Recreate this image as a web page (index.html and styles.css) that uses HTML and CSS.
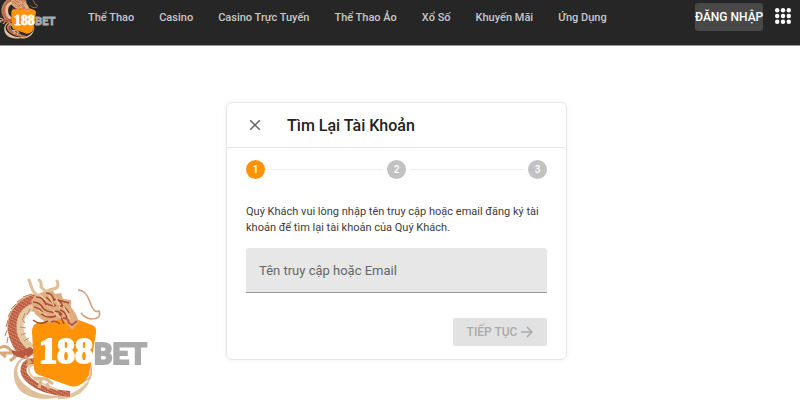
FILE: index.html
```html
<!DOCTYPE html>
<html lang="vi">
<head>
<meta charset="utf-8">
<meta name="viewport" content="width=device-width, initial-scale=1">
<title>Tìm Lại Tài Khoản</title>
<link rel="stylesheet" href="styles.css">
</head>
<body>
<header class="topbar">
  <a class="brand" href="#" aria-label="188BET">
    <svg class="brand-logo" viewBox="4 29 143 104"><use href="#logo"/></svg>
  </a>
  <nav class="menu">
    <a href="#">Thể Thao</a>
    <a href="#">Casino</a>
    <a href="#">Casino Trực Tuyến</a>
    <a href="#">Thể Thao Ảo</a>
    <a href="#">Xổ Số</a>
    <a href="#">Khuyến Mãi</a>
    <a href="#">Ứng Dụng</a>
  </nav>
  <button class="login" type="button">ĐĂNG NHẬP</button>
  <button class="apps" type="button" aria-label="Menu">
    <svg viewBox="0 0 16 16" width="16" height="16" fill="#fff">
      <circle cx="2.2" cy="2.2" r="2.2"/><circle cx="8" cy="2.2" r="2.2"/><circle cx="13.8" cy="2.2" r="2.2"/>
      <circle cx="2.2" cy="8" r="2.2"/><circle cx="8" cy="8" r="2.2"/><circle cx="13.8" cy="8" r="2.2"/>
      <circle cx="2.2" cy="13.8" r="2.2"/><circle cx="8" cy="13.8" r="2.2"/><circle cx="13.8" cy="13.8" r="2.2"/>
    </svg>
  </button>
</header>

<main class="page">
  <form class="card">
    <div class="card-head">
      <button class="close" type="button" aria-label="Đóng">
        <svg viewBox="0 0 12 12" width="12" height="12" fill="none" stroke="#62626a" stroke-width="1.5"><path d="M1.2 1.2l9.6 9.6M10.8 1.2l-9.6 9.6"/></svg>
      </button>
      <h1>Tìm Lại Tài Khoản</h1>
    </div>
    <div class="card-body">
      <ol class="steps">
        <li class="step active">1</li>
        <li class="step">2</li>
        <li class="step">3</li>
      </ol>
      <p class="hint">Quý Khách vui lòng nhập tên truy cập hoặc email đăng ký tài khoản để tìm lại tài khoản của Quý Khách.</p>
      <input class="field" type="text" aria-label="Tên truy cập hoặc Email" placeholder="Tên truy cập hoặc Email">
      <button class="next" type="submit" disabled>TIẾP TỤC
        <svg viewBox="0 0 12 12" width="12" height="12" fill="none" stroke="currentColor" stroke-width="1.5"><path d="M0 6h11M6 1l5 5-5 5"/></svg>
      </button>
    </div>
  </form>
</main>

<svg class="corner-logo" viewBox="0 0 150 130" role="img" aria-label="188BET">
  <defs>
    <pattern id="scales" width="3" height="3" patternUnits="userSpaceOnUse" patternTransform="rotate(30)">
      <rect width="3" height="3" fill="#b9563d"/>
      <path d="M0 0q1.5 2.6 3 0" fill="none" stroke="#e6b58c" stroke-width=".7"/>
    </pattern>
    <g id="logo">
      <!-- tail and hind leg -->
      <path d="M58 125C70 126 82 120 90 108C88 121 74 130 58 129Z" fill="#e2c6a0"/>
      <path d="M86 88q8 9 4 20l-8 4" fill="none" stroke="#dfb78d" stroke-width="2"/>
      <path d="M33 86C17 88 12 103 24 114S49 127 70 125C50 131 28 131 18 118C9 104 14 87 33 83Z" fill="#dec09a"/>
      <path d="M35 91C22 91 20 102 29 110S48 122 70 124" fill="none" stroke="url(#scales)" stroke-width="6"/>
      <path d="M35 95C28 95 26 102 34 108S49 117 58 120" fill="none" stroke="#e5c9a3" stroke-width="2"/>
      <!-- upper body -->
      <path d="M36 23C16 26 6 44 7 60L15 82L21 84C12 58 18 38 38 32Z" fill="#dfc199"/>
      <path d="M38 29C21 32 12 45 13 60Q14 73 25 83" fill="none" stroke="url(#scales)" stroke-width="10"/>
      <path d="M39 36C27 37 20 45 20 57Q20 70 32 78" fill="none" stroke="#e4c8a2" stroke-width="7"/>
      <path d="M36 38q-4 1-3 4M30 39l-3 6M25 43l-2 6M22 49l3 4M20 57l6 1M21 65l5-2M24 71l5-3" fill="none" stroke="#c98966" stroke-width="1"/>
      <path d="M32 24l-9 3M23 28l-6 4M16 34l-5 5M11 41l-3 6M8 50l-2 7M7 60l-2 6M8 67l-1 6" fill="none" stroke="#c87a59" stroke-width="1"/>
      <!-- fore claw -->
      <path d="M8 76Q15 86 30 77l6 4-10 8-12-3Z" fill="#ba5940"/>
      <path d="M11 81q-5-7-11-3M12 83l-11 0 5 4M16 86l-6 5M25 86l5 6-3 4" fill="none" stroke="#d9a87c" stroke-width="3" stroke-linejoin="round"/>
      <!-- badge -->
      <path d="M37 53L62 48Q69 45 76 49L92 55Q97 57 96 63L89 105Q81 119 70 116L39 105Q34 103 34 98L32 62Q32 55 37 53Z" fill="#ff9308"/>
      <path d="M34 108l12 1 7 5M41 110l-2 8M47 113l2 6" fill="none" stroke="#dfb98e" stroke-width="3"/>
      <!-- head -->
      <path d="M35 44L31 31L35 25L43 22L51 18L55 24L61 23L63 29L71 30L71 37L76 44L79 52L72 60L65 51L58 49L53 53L45 52Z" fill="#dfad7f"/>
      <path d="M39 27L33 21Q31 16 29 10M46 22L41 17Q42 12 39 10M47 21L53 19Q60 18 57 11" fill="none" stroke="#e1c098" stroke-width="3" stroke-linecap="round" stroke-linejoin="round"/>
      <path d="M36 27q8 0 10 8m-13-3q7 0 11 7m-10-2q7 1 10 8m2-22q7 0 8 8m-8-4l10 9m-13-5q6 5 12 5m-13 1q5 6 13 5m-14 2q7 5 15 2m-3-17q8 0 10 8m-5-7l11 3m-11 3q7-1 11 7m-9-3q7 2 7 10m-8-7l5 11m-13-2q5-2 9 2m-27-4q7 6 15 1m4-8q6-4 10 2" fill="none" stroke="#ad4935" stroke-width="1.5"/>
      <path d="M39 24l8 7m-9 9l8 5m3-20l5 11m2-8l4 10m3-2l6 10M53 41l8 7M66 42l4 7" stroke="#efcfa2" stroke-width="1.3"/>
      <path d="M63 48q5 0 6 5l3 2 5-4" fill="none" stroke="#bc5a40" stroke-width="2"/>
      <!-- whisker -->
      <path d="M78 20Q86 20 90 32T99 41Q102 49 91 49Q85 48 81 43" fill="none" stroke="#cf9c79" stroke-width="1.5"/>
      <text class="logo-num" x="39" y="93">188</text>
      <text class="logo-bet" x="94" y="94">BET</text>
    </g>
  </defs>
  <use href="#logo"/>
</svg>
</body>
</html>
```
FILE: styles.css
```css
* { box-sizing: border-box; }
body {
  margin: 0;
  min-height: 100vh;
  background: #fff;
  color: #3c3c3c;
  font-family: Roboto, "Liberation Sans", sans-serif;
  overflow-x: hidden;
}
button { border: 0; padding: 0; font: inherit; background: none; }
svg { display: block; }

.topbar {
  display: flex;
  align-items: flex-start;
  min-height: 46px;
  padding-right: 9px;
  background: #262626;
  border-bottom: 1px solid #999;
}
.brand { width: 88px; flex-shrink: 0; }
.brand-logo { width: 56px; height: 40px; }
.menu { display: flex; gap: 25px; flex: 1; }
.menu a {
  color: #c8c8c8;
  font-size: 11px;
  font-weight: 500;
  line-height: 35px;
  text-decoration: none;
  white-space: nowrap;
}
.login {
  width: 68px;
  height: 28px;
  margin-top: 3px;
  border-radius: 3px;
  background: #484848;
  color: #fff;
  font-size: 12px;
  font-weight: 500;
  white-space: nowrap;
}
.apps { margin: 8px 0 0 12px; }

.page { display: flex; justify-content: center; padding: 56px 7px 40px 0; }
.card {
  width: 100%;
  max-width: 341px;
  border: 1px solid #e8e8e8;
  border-radius: 6px;
  box-shadow: 0 0 6px rgba(0, 0, 0, 0.06);
}
.card-head {
  display: flex;
  align-items: center;
  gap: 26px;
  height: 45px;
  padding-left: 22px;
  border-bottom: 1px solid #e8e8e8;
}
h1 { margin: 0; font-size: 16px; font-weight: 500; color: #222; }
.card-body { display: flex; flex-direction: column; padding: 12px 19px 13px; }
.steps {
  display: flex;
  justify-content: space-between;
  margin: 0;
  padding: 0;
  list-style: none;
  background: linear-gradient(#eee, #eee) center / 100% 1px no-repeat;
}
.step {
  width: 19px;
  border-radius: 50%;
  background: #c2c2c2;
  box-shadow: 0 0 0 4px #fff;
  color: #fff;
  font-size: 10px;
  font-weight: 500;
  line-height: 19px;
  text-align: center;
}
.step.active { background: #ff9308; }
.hint { margin: 25px 0 12px; font-size: 11px; line-height: 16px; }
.field {
  width: 100%;
  height: 45px;
  padding: 0 13px;
  border: 0;
  border-bottom: 1px solid #999;
  border-radius: 3px 3px 0 0;
  background: #e7e7e7;
  color: #333;
  font: 13px Roboto, "Liberation Sans", sans-serif;
}
.field::placeholder { color: #666; opacity: 1; }
.next {
  display: flex;
  align-items: center;
  justify-content: center;
  gap: 4px;
  align-self: flex-end;
  width: 94px;
  height: 28px;
  margin-top: 25px;
  border-radius: 3px;
  background: #e2e2e2;
  color: #aaa;
  font-size: 12px;
  font-weight: 500;
}

.corner-logo { position: fixed; left: 0; bottom: 0; width: 150px; height: 130px; }
.logo-num { font: 700 36px "Liberation Serif", serif; fill: #fff; stroke: #fff; stroke-width: 2px; }
.logo-bet { font: 700 29px Roboto, sans-serif; fill: #aaa; stroke: #aaa; stroke-width: 2px; }
```
